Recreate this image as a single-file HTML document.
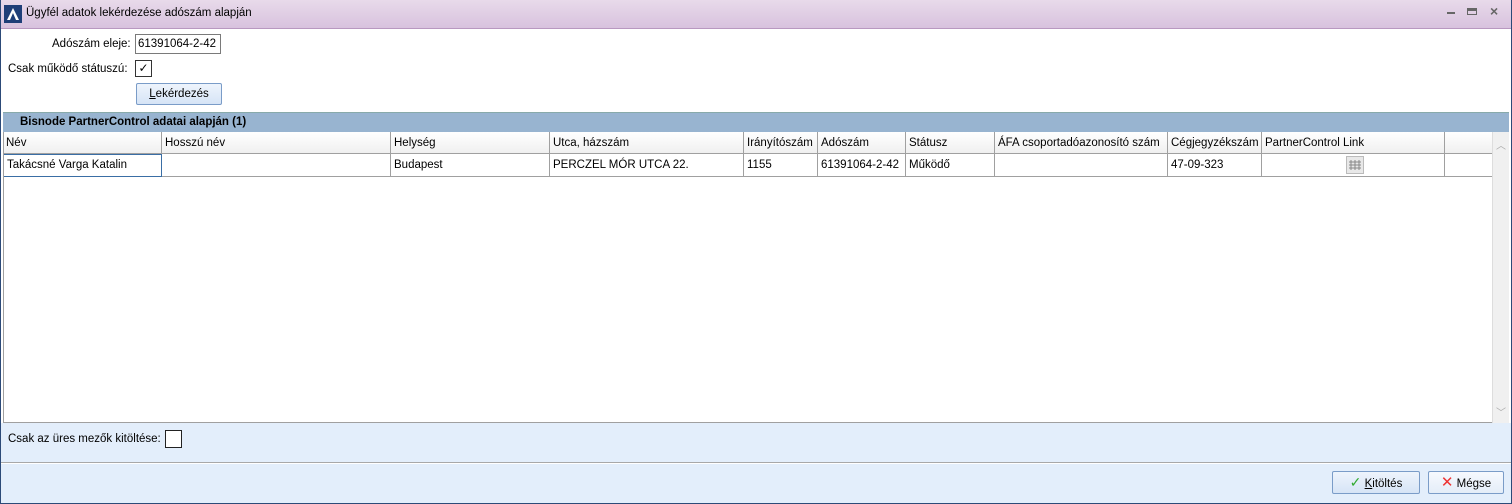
<!DOCTYPE html>
<html><head><meta charset="utf-8"><style>
*{margin:0;padding:0;box-sizing:border-box}
body{width:1512px;height:504px;overflow:hidden;background:#fff;font-family:"Liberation Sans",sans-serif;font-size:11.5px;color:#000;position:relative}
.a{position:absolute;white-space:nowrap}
.title{left:0;top:0;width:1512px;height:29px;background:linear-gradient(#e8daea,#d8c2de);border-bottom:1px solid #b898c0}
.frame{left:0;top:0;width:1512px;height:504px;border:1px solid #2c4a78;border-top:none;pointer-events:none}
.cell{position:absolute;top:0;height:100%;border-right:1px solid #a0a0a0;padding-left:3px;line-height:22px;overflow:hidden}
.hdr{left:3px;top:132px;width:1490px;height:22px;background:linear-gradient(#fff,#f0f0f0);border-bottom:1px solid #a0a0a0}
.row{left:3px;top:154px;width:1490px;height:23px;border-bottom:1px solid #a0a0a0}
.btn{border:1px solid #7a9cc8;border-radius:2px;background:linear-gradient(#eef4fc,#d6e4f6);text-align:center}
</style></head><body>
<div class="a title"></div>
<div class="a" style="left:4px;top:5px;width:18px;height:18px;background:#1f3f78"><svg width="18" height="18"><path d="M3 15 L9 3 L15 15 L12 15 L9 8 L6 15Z" fill="#fff"/></svg></div>
<div class="a" style="left:26px;top:7px">Ügyfél adatok lekérdezése adószám alapján</div>
<div class="a" style="left:1447px;top:12px;width:8px;height:2px;background:#666"></div>
<div class="a" style="left:1467px;top:8px;width:10px;height:7px;border:1px solid #666;border-top:3px solid #666"></div>
<div class="a" style="left:1490px;top:3px;font-size:14px;color:#666;font-weight:bold">×</div>

<div class="a" style="left:52px;top:38px">Adószám eleje:</div>
<div class="a" style="left:135px;top:34px;width:86px;height:20px;border:1px solid #7a7a7a;padding:3px 2px">61391064-2-42</div>
<div class="a" style="left:8px;top:63px">Csak működő státuszú:</div>
<div class="a" style="left:135px;top:60px;width:17px;height:17px;border:1px solid #333;text-align:center;line-height:15px;font-size:12px">✓</div>
<div class="a btn" style="left:136px;top:83px;width:86px;height:22px;line-height:20px"><u>L</u>ekérdezés</div>

<div class="a" style="left:3px;top:112px;width:1506px;height:20px;background:#98b4d0;border-top:1px solid #8aa;font-weight:bold;padding:3px 0 0 17px">Bisnode PartnerControl adatai alapján (1)</div>

<div class="a hdr">
<div class="cell" style="left:0;width:159px">Név</div>
<div class="cell" style="left:159px;width:229px">Hosszú név</div>
<div class="cell" style="left:388px;width:159px">Helység</div>
<div class="cell" style="left:547px;width:194px">Utca, házszám</div>
<div class="cell" style="left:741px;width:74px">Irányítószám</div>
<div class="cell" style="left:815px;width:88px">Adószám</div>
<div class="cell" style="left:903px;width:89px">Státusz</div>
<div class="cell" style="left:992px;width:173px">ÁFA csoportadóazonosító szám</div>
<div class="cell" style="left:1165px;width:94px">Cégjegyzékszám</div>
<div class="cell" style="left:1259px;width:183px">PartnerControl Link</div>
<div class="cell" style="left:1442px;width:48px"></div>
</div>
<div class="a row">
<div class="cell" style="left:0;width:159px;border:1px solid #3a6ea5;height:23px;line-height:21px">Takácsné Varga Katalin</div>
<div class="cell" style="left:159px;width:229px"></div>
<div class="cell" style="left:388px;width:159px">Budapest</div>
<div class="cell" style="left:547px;width:194px">PERCZEL MÓR UTCA 22.</div>
<div class="cell" style="left:741px;width:74px">1155</div>
<div class="cell" style="left:815px;width:88px">61391064-2-42</div>
<div class="cell" style="left:903px;width:89px">Működő</div>
<div class="cell" style="left:992px;width:173px"></div>
<div class="cell" style="left:1165px;width:94px">47-09-323</div>
<div class="cell" style="left:1259px;width:183px"><div style="position:absolute;left:84px;top:2px;width:18px;height:18px;background:#e8e8e8;border:1px solid #bbb"><svg width="16" height="16"><path d="M4 3V13M8 3V13M12 3V13M2 5H14M2 8H14M2 11H14" stroke="#888" stroke-width="1"/></svg></div></div>
<div class="cell" style="left:1442px;width:48px"></div>
</div>
<div class="a" style="left:3px;top:132px;width:1506px;height:291px;border:1px solid #a0a0a0;border-top:none"></div>
<div class="a" style="left:1492px;top:132px;width:17px;height:291px;background:#f0f0f0;border-left:1px solid #ddd;color:#aaa;font-size:10px;text-align:center"><div style="margin-top:5px">︿</div><div style="position:absolute;bottom:4px;width:100%">﹀</div></div>

<div class="a" style="left:1px;top:423px;width:1510px;height:40px;background:#e3eefb;border-bottom:1px solid #a8a8a8"></div>
<div class="a" style="left:8px;top:433px">Csak az üres mezők kitöltése:</div>
<div class="a" style="left:165px;top:430px;width:17px;height:18px;border:1px solid #222;background:#fff"></div>
<div class="a" style="left:1px;top:464px;width:1510px;height:39px;background:#e3eefb"></div>
<div class="a btn" style="left:1332px;top:471px;width:88px;height:23px;line-height:21px"><span style="color:#3a3;font-size:14px">✓</span> <u>K</u>itöltés</div>
<div class="a btn" style="left:1428px;top:471px;width:76px;height:23px;line-height:21px;background:linear-gradient(#f6f9fe,#e4edf8)"><span style="color:#e33;font-size:15px">✕</span> Mégse</div>
<div class="a frame"></div>
</body></html>
